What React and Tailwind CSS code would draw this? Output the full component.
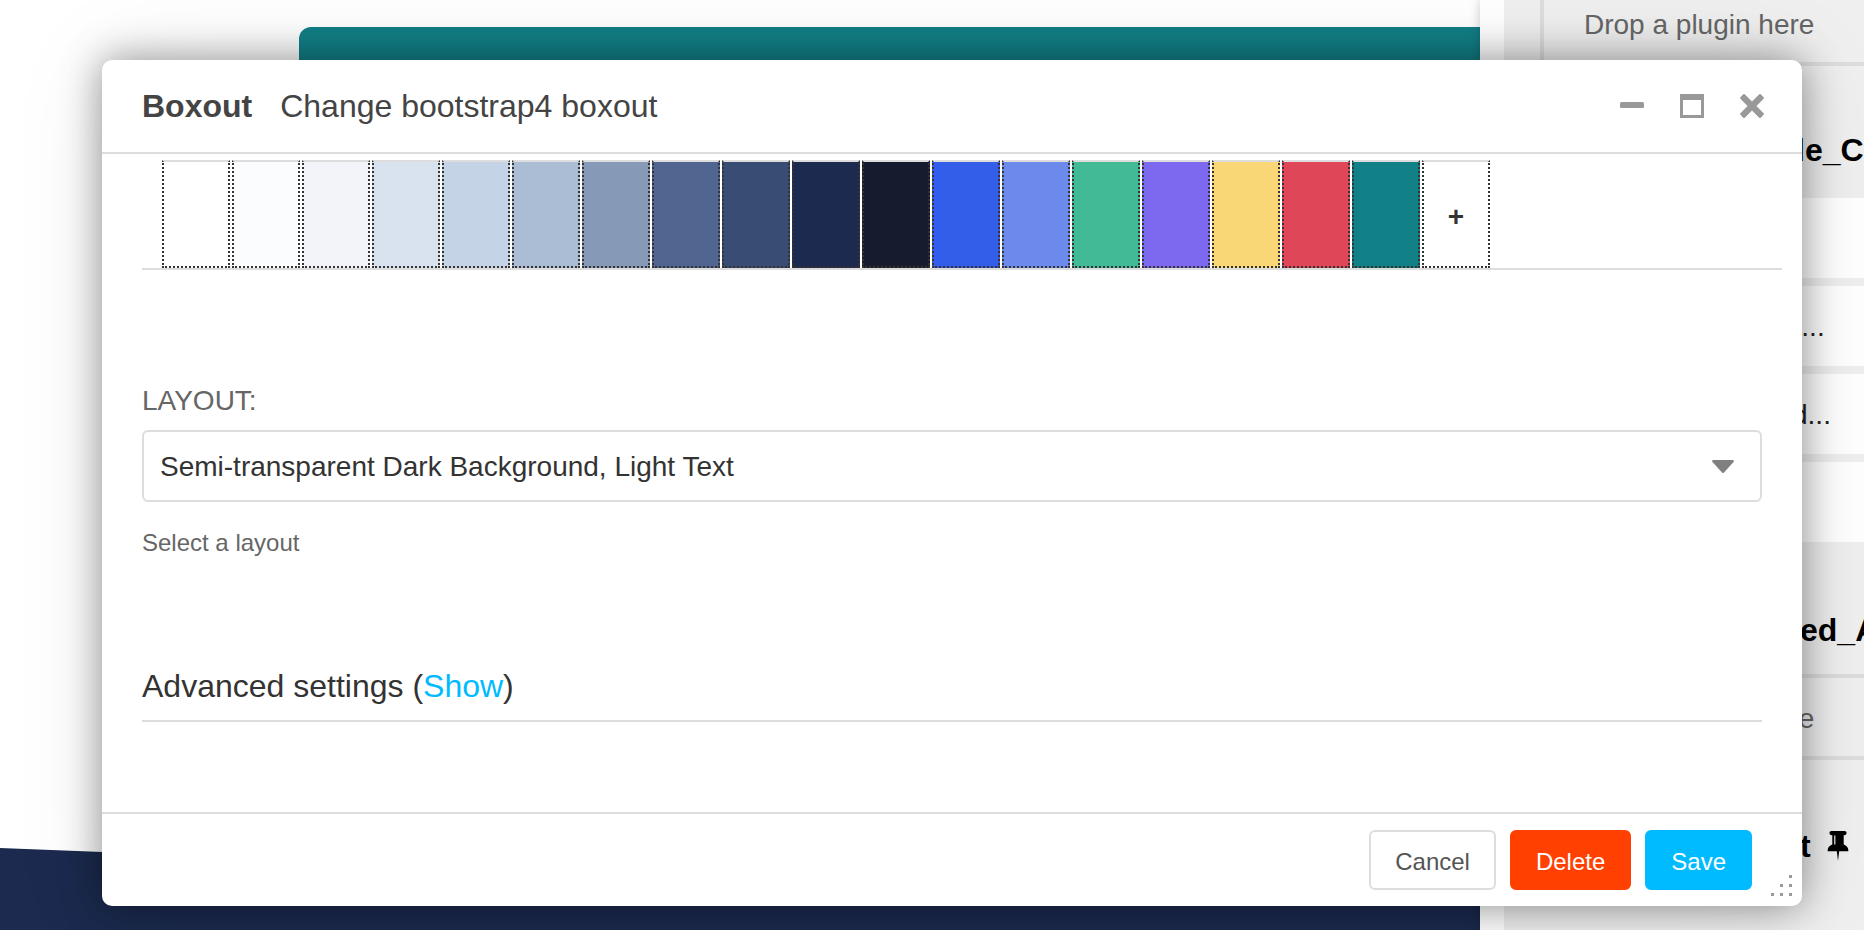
import React, { useState } from "react";

const SWATCHES = [
  { name: "white", color: "bg-white" },
  { name: "gray-100", color: "bg-[#fafcfe]" },
  { name: "gray-200", color: "bg-[#f3f4f9]" },
  { name: "gray-300", color: "bg-[#d9e2ef]" },
  { name: "gray-400", color: "bg-[#c5d3e6]" },
  { name: "gray-500", color: "bg-[#abbcd5]" },
  { name: "gray-600", color: "bg-[#869ab8]" },
  { name: "gray-700", color: "bg-[#506690]" },
  { name: "gray-800", color: "bg-[#384c74]" },
  { name: "gray-900", color: "bg-[#1b2a4e]" },
  { name: "black", color: "bg-[#161c2d]" },
  { name: "primary", color: "bg-[#335eea]" },
  { name: "primary-light", color: "bg-[#6c8aec]" },
  { name: "success", color: "bg-[#42ba96]" },
  { name: "purple", color: "bg-[#7c69ef]" },
  { name: "warning", color: "bg-[#fad776]" },
  { name: "danger", color: "bg-[#df4759]" },
  { name: "teal", color: "bg-[#128087]" },
];

const swatchClass =
  "h-[108px] w-[68px] shrink-0 border-2 border-dotted border-[#333] border-t-[#ddd] [border-top-style:solid]";

const PinIcon = () => (
  <svg width="22" height="30" viewBox="0 0 22 30" aria-hidden="true">
    <path
      fillRule="evenodd"
      d="M4.500 0h13a2 2 0 0 1 0 4.200h-.800V13.500c2.800 1 4.700 3.200 4.700 6.200a.5.5 0 0 1-.500.500H12.200L11 30 9.800 20.200H1.100a.5.5 0 0 1-.5-.5c0-3 1.900-5.200 4.700-6.200V4.200H4.500a2 2 0 0 1 0-4.200zM7.200 4.500v9h1.200v-9z"
    />
  </svg>
);

const DropZone = () => (
  <div className="ml-9 flex h-[86px] shrink-0 items-center border-4 border-r-0 border-[#ddd] pt-1 pl-10 text-[28px] whitespace-nowrap text-[#666]">
    Drop a plugin here
  </div>
);

const PluginRow = ({ children }) => (
  <div className="h-20 bg-white pl-[288px] text-[28px] leading-[82px] whitespace-nowrap text-[#222] [font-kerning:none]">
    {children}
  </div>
);

const Page = () => (
  <div className="relative flex h-full min-w-0 flex-1 flex-col justify-between">
    <div className="mt-[27px] ml-[299px] h-[400px] rounded-tl-xl bg-[#128087]" />
    <div className="h-[82px] bg-[#1b2a4e] [clip-path:polygon(0_0,100%_70%,100%_100%,0_100%)]" />
  </div>
);

const Structure = () => (
  <aside className="z-10 h-full w-96 shrink-0 overflow-hidden bg-white pl-6 shadow-[0_0_10px_rgba(0,0,0,0.2)]">
    <div className="flex h-full flex-col bg-[#efefef]">
      <div className="-mt-5">
        <DropZone />
      </div>
      <h3 className="h-[132px] shrink-0 pl-[292px] text-[32px] leading-[168px] font-bold whitespace-nowrap text-black">
        le_C
      </h3>
      <div className="flex flex-col gap-2">
        <PluginRow />
        <PluginRow>r...</PluginRow>
        <PluginRow>d...</PluginRow>
        <PluginRow />
      </div>
      <h3 className="h-[132px] shrink-0 pl-[296px] text-[32px] leading-[176px] font-bold whitespace-nowrap text-black">
        ed_A
      </h3>
      <DropZone />
      <h3 className="flex h-[168px] shrink-0 items-center gap-4 pt-1 pl-[296px] text-[32px] font-bold text-black">
        t
        <PinIcon />
      </h3>
    </div>
  </aside>
);

const ModalHeader = () => (
  <header className="flex h-[94px] items-center justify-between border-b-2 border-[#ddd] pr-[38px] pl-10">
    <h2 className="flex gap-7 text-[32px] text-[#444]">
      <strong>Boxout</strong>
      <span>Change bootstrap4 boxout</span>
    </h2>
    <div className="flex gap-9 text-[#999]">
      <button type="button" aria-label="Minimize">
        <svg width="24" height="24" viewBox="0 0 24 24" fill="currentColor">
          <rect y="8" width="24" height="6" rx="1.500" />
        </svg>
      </button>
      <button type="button" aria-label="Maximize">
        <svg width="24" height="24" viewBox="0 0 24 24" fill="currentColor">
          <path fillRule="evenodd" d="M0 0h24v24H0zM3 6v15h18V6z" />
        </svg>
      </button>
      <button type="button" aria-label="Close">
        <svg width="24" height="24" viewBox="0 0 24 24" fill="currentColor">
          <path d="M3 .6q1-1 2 0L12 7.600l7-7q1-1 2 0l2.400 2.400q1 1 0 2L16.400 12l7 7q1 1 0 2L21 23.400q-1 1-2 0l-7-7-7 7q-1 1-2 0L.6 21q-1-1 0-2l7-7-7-7q-1-1 0-2z" />
        </svg>
      </button>
    </div>
  </header>
);

const ModalFooter = ({ onClose }) => (
  <footer className="relative flex h-[94px] items-center justify-end gap-[14px] border-t-2 border-[#ddd] pr-[50px] text-2xl">
    <button
      type="button"
      onClick={onClose}
      className="h-[60px] rounded-md border-2 border-[#ddd] bg-white px-6 pt-[3px] text-[#555]"
    >
      Cancel
    </button>
    <button
      type="button"
      className="h-[60px] rounded-md border-2 border-[#ff4000] bg-[#ff4000] px-6 pt-[3px] text-white"
    >
      Delete
    </button>
    <button
      type="submit"
      className="h-[60px] rounded-md border-2 border-[#00bbff] bg-[#00bbff] px-6 pt-[3px] text-white"
    >
      Save
    </button>
    <svg
      className="absolute right-[10px] bottom-[10px]"
      width="21"
      height="21"
      viewBox="0 0 21 21"
      fill="#999"
      aria-hidden="true"
    >
      <path d="M18 0h3v3h-3zM9 9h3v3H9zM18 9h3v3h-3zM0 18h3v3H0zM9 18h3v3H9zM18 18h3v3h-3z" />
    </svg>
  </footer>
);

const App = () => {
  const [layout, setLayout] = useState("dark");
  const [selected, setSelected] = useState(null);
  const [open, setOpen] = useState(true);

  return (
    <div className="relative flex h-screen overflow-hidden bg-white font-['Liberation_Sans',Arial,sans-serif]">
      <Page />
      <Structure />
      {open && (
        <form
          onSubmit={(e) => e.preventDefault()}
          className="absolute top-[60px] right-[62px] left-[102px] z-20 rounded-[10px] bg-white shadow-[0_0_40px_rgba(0,0,0,0.42),0_0_100px_rgba(0,0,0,0.08)]"
        >
          <ModalHeader />
          <div className="pt-[6px] pr-10 pb-[90px] pl-10">
            <div className="-mr-5 flex gap-[2px] border-b-2 border-[#ddd] pl-5">
              {SWATCHES.map((s) => (
                <button
                  key={s.name}
                  type="button"
                  aria-label={s.name}
                  aria-pressed={selected === s.name}
                  onClick={() => setSelected(s.name)}
                  className={`${swatchClass} ${s.color}`}
                />
              ))}
              <button
                type="button"
                className={`${swatchClass} bg-white pt-[6px] text-[28px] font-bold text-[#333]`}
              >
                +
              </button>
            </div>
            <label
              htmlFor="layout"
              className="mt-[111px] block text-[28px] leading-10 text-[#666]"
            >
              LAYOUT:
            </label>
            <div className="relative mt-[9px]">
              <select
                id="layout"
                value={layout}
                onChange={(e) => setLayout(e.target.value)}
                className="block h-[72px] w-full appearance-none rounded-md border-2 border-[#ddd] bg-white px-4 pt-[2px] text-[28px] text-[#333]"
              >
                <option value="dark">
                  Semi-transparent Dark Background, Light Text
                </option>
              </select>
              <svg
                className="pointer-events-none absolute top-[30px] right-7"
                width="22"
                height="13"
                viewBox="0 0 22 13"
                fill="#808080"
                aria-hidden="true"
              >
                <path d="M1 0h20q1.500.8.500 2L12 12.400q-1 1-2 0L.5 2Q-.5.8 1 0z" />
              </svg>
            </div>
            <p className="mt-[25px] text-2xl leading-8 text-[#666]">
              Select a layout
            </p>
            <h3 className="mt-[105px] border-b-2 border-[#ddd] pb-3 text-[32px] leading-[44px] text-[#333]">
              Advanced settings (
              <a href="#advanced" className="text-[#00bbff]">
                Show
              </a>
              )
            </h3>
          </div>
          <ModalFooter onClose={() => setOpen(false)} />
        </form>
      )}
    </div>
  );
};

export default App;
